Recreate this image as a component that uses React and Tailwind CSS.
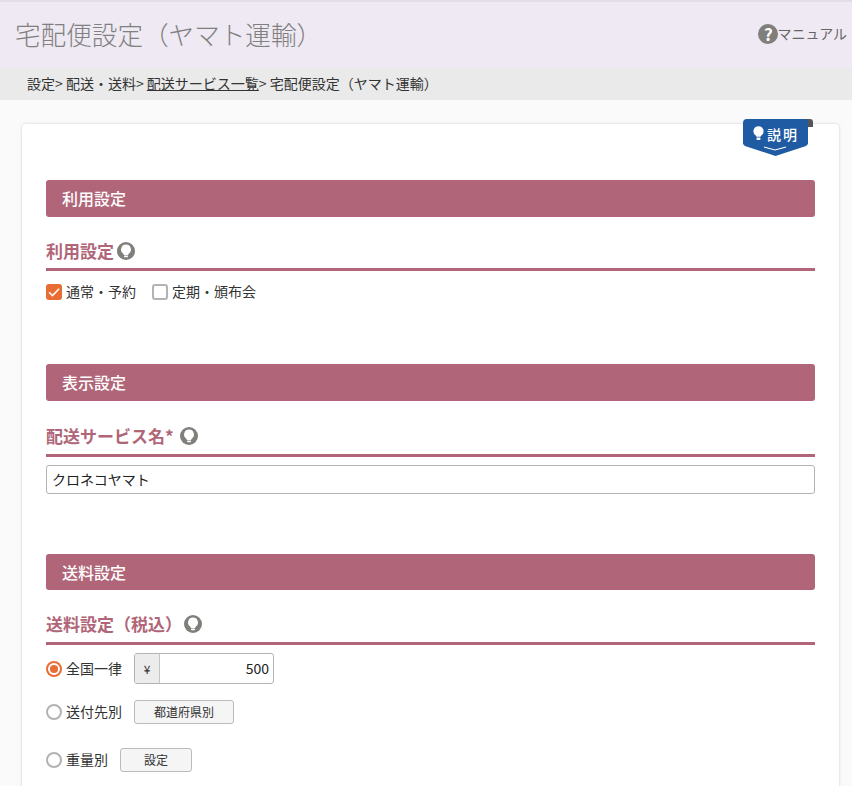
import React from "react";

const FONT = { fontFamily: '"Noto Sans CJK JP", "Noto Sans", sans-serif' };

function Bulb({ className }) {
  return (
    <svg viewBox="0 0 18 18" className={className}>
      <circle cx="9" cy="9" r="9" fill="#817f7c" />
      <path d="M9 2.6a4.9 4.9 0 0 0-3 8.8c.6.5.9 1 .9 1.5h4.2c0-.5.3-1 .9-1.5A4.9 4.9 0 0 0 9 2.6z" fill="#fff" />
      <rect x="7" y="13.4" width="4" height="1.9" rx=".7" fill="#fff" />
    </svg>
  );
}

function SectionBar({ children, h = "h-[37px] pb-[2px]" }) {
  return (
    <div className={`${h} flex items-center rounded-[3px] bg-[#b06678] pl-4 text-[16px] font-medium text-white`}>
      {children}
    </div>
  );
}

function SubHead({ children, gap = "gap-[3px]", h = "h-[39px]" }) {
  return (
    <div className={`flex ${h} items-center ${gap} border-b-[3px] border-[#b06678] pt-[1px] text-[17px] font-bold text-[#b06678]`}>
      <span>{children}</span>
      <Bulb className="h-[18px] w-[18px]" />
    </div>
  );
}

function Radio({ on }) {
  return (
    <span className={`flex h-4 w-4 items-center justify-center rounded-full border-2 bg-white ${on ? "border-[#e96c34]" : "border-[#b3b3b3]"}`}>
      {on && <span className="h-2 w-2 rounded-full bg-[#e96c34]" />}
    </span>
  );
}

function Btn({ children, w }) {
  return (
    <button className={`${w} h-6 rounded-[3px] border border-[#bbb] bg-[#f5f5f5] text-[12px] text-[#333]`}>{children}</button>
  );
}

export default function App() {
  return (
    <div style={FONT} className="h-[786px] w-[852px] overflow-hidden bg-[#fafafa] text-[#333]">
      <header className="flex h-[68px] items-start justify-between border-t-2 border-[#e2dee6] bg-[#efe9f3] pl-[15px] pr-[5px]">
        <h1 className="mt-[14px] text-[25.6px] font-light leading-9 text-[#808080]">宅配便設定（ヤマト運輸）</h1>
        <a className="mt-[21px] flex items-center text-[14px] leading-5 text-[#666]">
          <span className="-mr-px flex h-5 w-5 items-center justify-center rounded-full bg-[#817f7c] text-[17px] font-bold text-white">?</span>
          <span className="pb-[2px]">マニュアル</span>
        </a>
      </header>
      <nav className="flex h-8 items-center whitespace-pre bg-[#eaeaea] pb-[2px] pl-[27px] text-[14px] text-[#333]">
        <span>設定&gt; 配送・送料&gt; </span>
        <a className="underline">配送サービス一覧</a>
        <span>&gt; 宅配便設定（ヤマト運輸）</span>
      </nav>
      <main className="relative ml-[22px] mt-6 h-[700px] w-[817px] rounded-[4px] bg-white px-6 pt-14 shadow-[0_0_3px_rgba(0,0,0,0.18)]">
        <div className="absolute right-[31px] top-[-5px] h-[37px] w-[65px]">
          <span className="absolute right-[-5px] top-0 h-2 w-3 rounded-tr-[3px] bg-[#555]" />
          <div className="absolute inset-0 flex items-start justify-center gap-[3px] rounded-t-[4px] bg-[#1f5ba3] pl-[1px] pt-[5px] text-[14px] font-medium tracking-[2px] text-white [clip-path:polygon(0_0,100%_0,100%_25px,97%_27px,50%_100%,3%_27px,0_25px)]">
            <svg viewBox="0 0 12 16" className="mt-[2px] h-[15px] w-[11px]">
              <path d="M6 0a5.5 5.5 0 0 0-3.3 9.9c.6.5 1 1.1 1 1.7h4.6c0-.6.4-1.2 1-1.7A5.5 5.5 0 0 0 6 0z" fill="#fff" />
              <rect x="3.8" y="12.4" width="4.4" height="2.6" rx="1" fill="#fff" />
            </svg>
            <span className="leading-[20px]">説明</span>
          </div>
          <svg viewBox="0 0 24 6" className="absolute bottom-[4px] left-[20px] h-[6px] w-[24px]">
            <path d="M1 1l11 3 11-3" fill="none" stroke="#fff" strokeWidth="1.2" />
          </svg>
        </div>

        <SectionBar>利用設定</SectionBar>
        <div className="mt-[15px]">
          <SubHead>利用設定</SubHead>
        </div>
        <div className="mt-[13px] flex h-4 items-center text-[14px]">
          <span className="flex h-4 w-4 items-center justify-center rounded-[3px] bg-[#e96c34]">
            <svg viewBox="0 0 12 12" className="h-3.5 w-3.5">
              <path d="M1.8 6.2l2.9 2.9L10.4 3.2" fill="none" stroke="#fff" strokeWidth="1.3" />
            </svg>
          </span>
          <span className="ml-1 pb-[2px]">通常・予約</span>
          <span className="ml-4 h-4 w-4 rounded-[3px] border-2 border-[#b3b3b3] bg-white" />
          <span className="ml-1 pb-[2px]">定期・頒布会</span>
        </div>

        <div className="mt-[64px]">
          <SectionBar>表示設定</SectionBar>
        </div>
        <div className="mt-[15px]">
          <SubHead gap="gap-1.5" h="h-[41px]">配送サービス名*</SubHead>
        </div>
        <input
          readOnly
          value="クロネコヤマト"
          className="mt-2 block h-[29px] w-full rounded-[3px] border border-[#b3b3b3] bg-white px-[5px] pb-[2px] text-[14px] text-[#222]"
        />

        <div className="mt-[60px]">
          <SectionBar h="h-[36px]">送料設定</SectionBar>
        </div>
        <div className="mt-[15px]">
          <SubHead gap="gap-0.5" h="h-[40px]">送料設定（税込）</SubHead>
        </div>

        <div className="mt-2 flex h-[31px] items-center text-[14px]">
          <Radio on />
          <span className="ml-1">全国一律</span>
          <div className="ml-3 flex h-[31px] w-[140px] overflow-hidden rounded-[3px] border border-[#b3b3b3] bg-white">
            <span className="flex w-[25px] items-center justify-center border-r border-[#c4c4c4] bg-[#ececec] text-[12px]">¥</span>
            <span className="flex flex-1 items-center justify-end pr-1 text-[14px] text-[#222]">500</span>
          </div>
        </div>
        <div className="mt-4 flex h-6 items-center text-[14px]">
          <Radio />
          <span className="ml-1 pb-[2px]">送付先別</span>
          <span className="ml-3 flex"><Btn w="w-[100px]">都道府県別</Btn></span>
        </div>
        <div className="mt-6 flex h-6 items-center text-[14px]">
          <Radio />
          <span className="ml-1 pb-[2px]">重量別</span>
          <span className="ml-3 flex"><Btn w="w-[72px]">設定</Btn></span>
        </div>
      </main>
    </div>
  );
}
